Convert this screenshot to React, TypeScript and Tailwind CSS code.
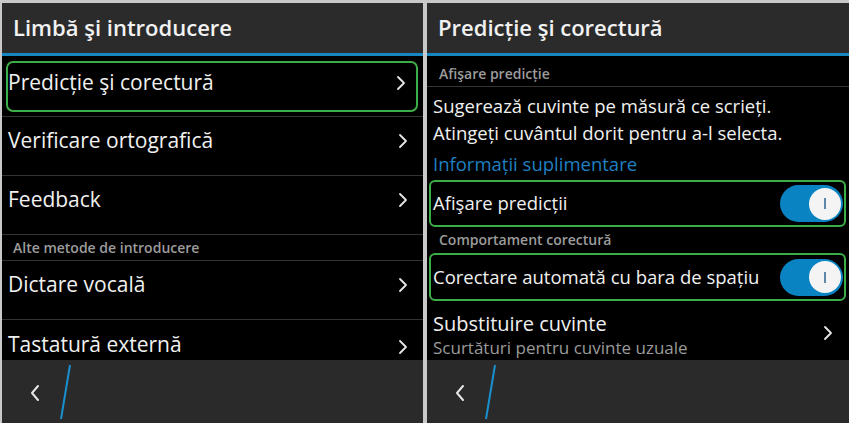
import React from "react";

const font = { fontFamily: "'Open Sans', 'Noto Sans', sans-serif" };

function Chevron({ className = "" }: { className?: string }) {
  return (
    <svg className={className} width="10" height="16" viewBox="0 0 10 16" fill="none">
      <path d="M2 2l6 6-6 6" stroke="#e6e6e6" strokeWidth="1.8" strokeLinecap="round" strokeLinejoin="round" />
    </svg>
  );
}

function Header({ title }: { title: string }) {
  return (
    <div className="shrink-0">
      <div className="h-[50px] bg-[#2b2b2b] flex items-center pl-[11px] pb-[2px]">
        <span className="text-[22px] font-semibold text-[#f2f2f2] leading-none">{title}</span>
      </div>
      <div className="h-[3px] bg-[#1787c4]" />
    </div>
  );
}

function BottomBar() {
  return (
    <div className="flex-1 bg-[#2a2a2a] flex items-center relative">
      <svg className="ml-[27px] mt-[2px]" width="12" height="18" viewBox="0 0 12 18" fill="none">
        <path d="M9 2L3 9l6 7" stroke="#e6e6e6" strokeWidth="2" strokeLinecap="round" strokeLinejoin="round" />
      </svg>
      <svg className="absolute left-[56px] top-[4px]" width="14" height="56" viewBox="0 0 14 56" fill="none">
        <path d="M12 1L3 55" stroke="#1a8fcf" strokeWidth="2" />
      </svg>
    </div>
  );
}

function Row({ label }: { label: string }) {
  return (
    <div className="h-[59px] shrink-0 flex items-center justify-between pl-[6px] pr-[15px] pb-[11px] border-b border-[#333]">
      <span className="text-[21px] text-[#f0f0f0] leading-none">{label}</span>
      <Chevron />
    </div>
  );
}

function Toggle() {
  return (
    <div className="w-[63px] h-[37px] rounded-full bg-[#0a83c2] flex items-center justify-end pr-[2px]">
      <div className="w-[32px] h-[32px] rounded-full bg-[#f4f4f4] flex items-center justify-center">
        <div className="w-[2px] h-[11px] bg-[#5d87a6]" />
      </div>
    </div>
  );
}

export default function App() {
  return (
    <div className="w-[849px] h-[423px] bg-[#c9c9c9] flex gap-[4px] pl-[2px] pt-[3px] overflow-hidden" style={font}>
      {/* left screen */}
      <div className="w-[421px] h-[420px] bg-black flex flex-col overflow-hidden">
        <Header title="Limbă şi introducere" />
        <div className="h-[61px] shrink-0 pt-[5px] pl-[4px] pr-[5px] border-b border-[#333]">
          <div className="h-[51px] rounded-[7px] border-2 border-[#3cae48] flex items-center justify-between pr-[10px] pb-[8px]">
            <span className="text-[21px] text-[#f0f0f0] leading-none">Predicție şi corectură</span>
            <Chevron />
          </div>
        </div>
        <Row label="Verificare ortografică" />
        <Row label="Feedback" />
        <div className="h-[26px] shrink-0 flex items-center pl-[11px] border-b border-[#333]">
          <span className="text-[14px] font-semibold text-[#9c9c9c] leading-none">Alte metode de introducere</span>
        </div>
        <Row label="Dictare vocală" />
        <div className="h-[40px] shrink-0 flex items-end justify-between pl-[6px] pr-[15px] pb-[5px]">
          <span className="text-[21px] text-[#f0f0f0] leading-none">Tastatură externă</span>
          <Chevron />
        </div>
        <BottomBar />
      </div>

      {/* right screen */}
      <div className="w-[422px] h-[420px] bg-black flex flex-col overflow-hidden">
        <Header title="Predicție şi corectură" />
        <div className="h-[31px] shrink-0 flex items-end pl-[12px] pb-[5px] border-b border-[#333]">
          <span className="text-[14px] font-semibold text-[#9c9c9c] leading-none">Afişare predicție</span>
        </div>
        <div className="pl-[6px] pt-[5px] text-[18.5px] leading-[27px] text-[#f0f0f0]">
          <p>Sugerează cuvinte pe măsură ce scrieți.</p>
          <p>Atingeți cuvântul dorit pentru a-l selecta.</p>
          <p className="mt-[4px] text-[#1f80c2]">Informații suplimentare</p>
        </div>
        <div className="mt-[3px] mx-[2px] mr-[3px] h-[47px] shrink-0 rounded-[6px] border-2 border-[#3cae48] flex items-center justify-between pl-[2px] pr-[1px]">
          <span className="text-[18.5px] text-[#f0f0f0] leading-none">Afişare predicții</span>
          <Toggle />
        </div>
        <div className="h-[26px] shrink-0 flex items-center pl-[12px]">
          <span className="text-[14px] font-semibold text-[#9c9c9c] leading-none">Comportament corectură</span>
        </div>
        <div className="mx-[2px] mr-[3px] h-[48px] shrink-0 rounded-[6px] border-2 border-[#3cae48] flex items-center justify-between pl-[2px] pr-[1px]">
          <span className="text-[18.5px] text-[#f0f0f0] leading-none">Corectare automată cu bara de spațiu</span>
          <Toggle />
        </div>
        <div className="h-[59px] shrink-0 flex items-start justify-between pl-[6px] pr-[16px] pt-[10px]">
          <div className="flex flex-col">
            <span className="text-[20px] text-[#f0f0f0] leading-[26px]">Substituire cuvinte</span>
            <span className="text-[17px] text-[#9a9a9a] leading-[22px]">Scurtături pentru cuvinte uzuale</span>
          </div>
          <Chevron className="mt-[14px]" />
        </div>
        <BottomBar />
      </div>
    </div>
  );
}
